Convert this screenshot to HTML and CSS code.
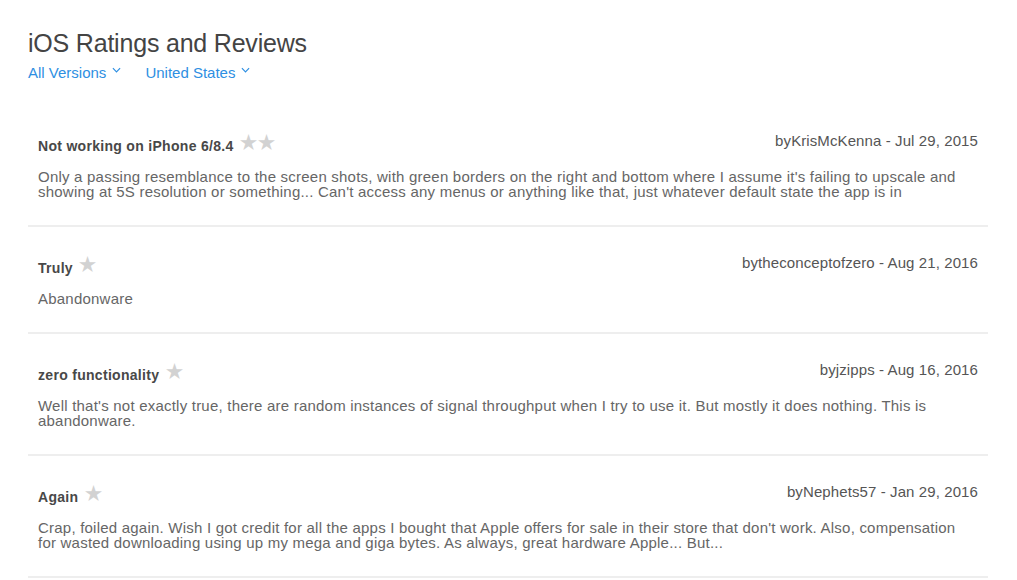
FILE: index.html
```html
<!DOCTYPE html>
<html>
<head>
<meta charset="utf-8">
<link rel="stylesheet" href="styles.css">
</head>
<body>
<div class="page">
  <header class="head">
    <h1 class="title">iOS Ratings and Reviews</h1>
    <div class="filters">
      <span class="filter">All Versions <svg class="chev" viewBox="0 0 10 6" width="9" height="6"><path d="M1 1l4 4 4-4" fill="none" stroke="currentColor" stroke-width="1.3"/></svg></span>
      <span class="filter">United States <svg class="chev" viewBox="0 0 10 6" width="9" height="6"><path d="M1 1l4 4 4-4" fill="none" stroke="currentColor" stroke-width="1.3"/></svg></span>
    </div>
  </header>
  <section class="reviews">
    <article class="review">
      <div class="rhead">
        <div class="rtitle">Not working on iPhone 6/8.4 <span class="stars">★★</span></div>
        <div class="meta">byKrisMcKenna - Jul 29, 2015</div>
      </div>
      <p class="body">Only a passing resemblance to the screen shots, with green borders on the right and bottom where I assume it's failing to upscale and showing at 5S resolution or something... Can't access any menus or anything like that, just whatever default state the app is in</p>
    </article>
    <article class="review">
      <div class="rhead">
        <div class="rtitle">Truly <span class="stars">★</span></div>
        <div class="meta">bytheconceptofzero - Aug 21, 2016</div>
      </div>
      <p class="body">Abandonware</p>
    </article>
    <article class="review">
      <div class="rhead">
        <div class="rtitle">zero functionality <span class="stars">★</span></div>
        <div class="meta">byjzipps - Aug 16, 2016</div>
      </div>
      <p class="body">Well that's not exactly true, there are random instances of signal throughput when I try to use it. But mostly it does nothing. This is abandonware.</p>
    </article>
    <article class="review">
      <div class="rhead">
        <div class="rtitle">Again <span class="stars">★</span></div>
        <div class="meta">byNephets57 - Jan 29, 2016</div>
      </div>
      <p class="body">Crap, foiled again. Wish I got credit for all the apps I bought that Apple offers for sale in their store that don't work. Also, compensation for wasted downloading using up my mega and giga bytes. As always, great hardware Apple... But...</p>
    </article>
  </section>
</div>
</body>
</html>
```
FILE: styles.css
```css
html, body { margin: 0; padding: 0; background: #fff; }
body { font-family: "Liberation Sans", Arial, sans-serif; color: #555; }
.page { padding: 28px 29px 0 28px; }
.title { margin: 0; font-size: 25px; font-weight: 300; color: #444; line-height: 30px; letter-spacing: -0.2px; }
.filters { display: flex; gap: 24px; margin-top: 6px; font-size: 15px; line-height: 18px; color: #2e8fe2; }
.filter { display: inline-flex; align-items: center; gap: 6px; }
.chev { margin-top: -6px; }
.reviews { margin-top: 23px; }
.review { padding: 27px 10px 26px; border-bottom: 2px solid #eeeeee; }
.rhead { display: flex; justify-content: space-between; align-items: flex-start; }
.rtitle { font-size: 14px; line-height: 18px; font-weight: 600; color: #484848; padding-top: 4px; letter-spacing: 0.3px; }
.stars { color: #d2d2d2; font-size: 19px; letter-spacing: 1px; margin-left: 2px; position: relative; top: -2px; }
.meta { font-size: 15px; line-height: 18px; color: #555; letter-spacing: 0.1px; }
.body { margin: 14px 0 0; padding-right: 16px; font-size: 15px; line-height: 15px; color: #666; letter-spacing: 0.22px; }
```
